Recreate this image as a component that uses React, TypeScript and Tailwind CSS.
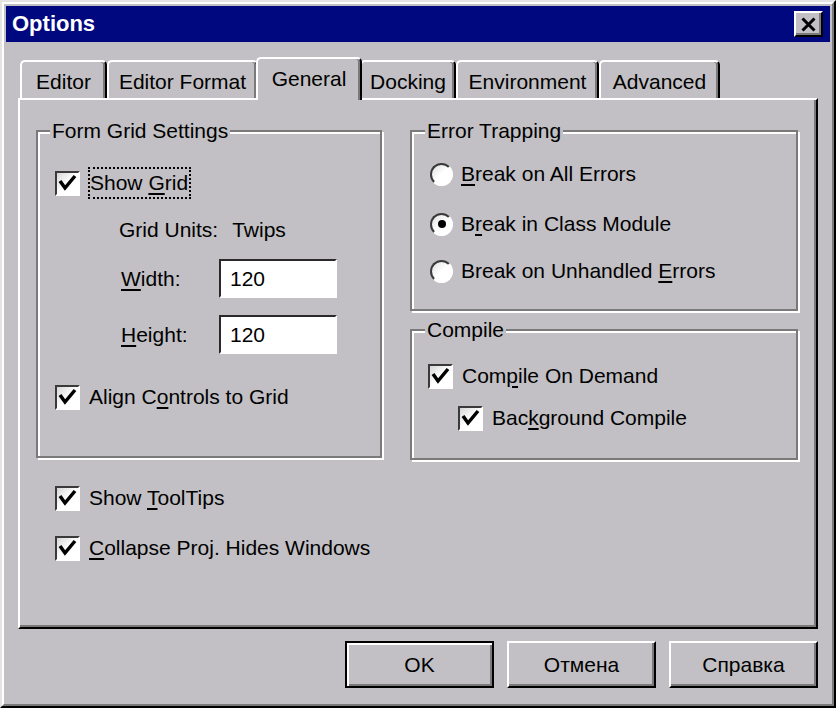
import type { ReactNode } from "react";

const tabs = [
  { label: "Editor", w: "w-[87px]" },
  { label: "Editor Format", w: "w-[151px]" },
  { label: "General", w: "w-[106px]", active: true },
  { label: "Docking", w: "w-[96px]" },
  { label: "Environment", w: "w-[143px]" },
  { label: "Advanced", w: "w-[121px]" },
];

function U({ children }: { children: ReactNode }) {
  return <span className="underline decoration-[2px] underline-offset-[3px]">{children}</span>;
}

function Check() {
  return (
    <span className="flex h-[25px] w-[25px] shrink-0 items-center justify-center border-2 border-t-[#3a3a3a] border-l-[#3a3a3a] border-r-white border-b-white bg-linear-to-br from-[#d6d6d6] via-white to-white">
      <svg viewBox="0 0 21 21" className="h-[21px] w-[21px]">
        <polyline points="3,8 8,15 18,3" fill="none" stroke="#000" strokeWidth="3.5" strokeLinejoin="miter" />
      </svg>
    </span>
  );
}

function Radio({ on = false }: { on?: boolean }) {
  return (
    <span className="flex h-[23px] w-[23px] shrink-0 items-center justify-center rounded-full border-2 border-t-[#3a3a3a] border-l-[#3a3a3a] border-r-white border-b-white bg-linear-to-br from-[#e0e0e0] via-white to-white">
      {on && <span className="h-[8px] w-[8px] rounded-full bg-black" />}
    </span>
  );
}

function CheckRow({ children, className = "" }: { children: ReactNode; className?: string }) {
  return (
    <div className={`flex h-[24px] items-center gap-[9px] ${className}`}>
      <Check />
      <span className="whitespace-nowrap">{children}</span>
    </div>
  );
}

function RadioRow({ children, on, className = "" }: { children: ReactNode; on?: boolean; className?: string }) {
  return (
    <div className={`flex h-[24px] items-center gap-[8px] ${className}`}>
      <Radio on={on} />
      <span className="whitespace-nowrap">{children}</span>
    </div>
  );
}

function Field({ value }: { value: string }) {
  return (
    <div className="h-[39px] w-[118px] border-2 border-t-[#2a2a2a] border-l-[#2a2a2a] border-r-white border-b-white bg-white pl-[9px] leading-[35px]">
      {value}
    </div>
  );
}

function Button({ children, main = false }: { children: ReactNode; main?: boolean }) {
  return (
    <div
      className={
        main
          ? "flex h-[47px] w-[149px] items-center justify-center border-2 border-black bg-[#c2c0c4] shadow-[inset_2px_2px_0_#fff,inset_-2px_-2px_0_#7a7a7a]"
          : "flex h-[47px] w-[149px] items-center justify-center border-2 border-t-white border-l-white border-r-black border-b-black bg-[#c2c0c4] shadow-[inset_-2px_-2px_0_#7a7a7a]"
      }
    >
      {children}
    </div>
  );
}

export default function App() {
  return (
    <div className="h-[708px] w-[836px] border-2 border-t-[#e4e4e4] border-l-[#e4e4e4] border-r-black border-b-black bg-[#c2c0c4] font-['Liberation_Sans',Arial,sans-serif] text-[21px] leading-[24px] text-black">
      <div className="flex h-full flex-col border-2 border-t-white border-l-white border-r-[#7a7a7a] border-b-[#7a7a7a] p-[2px]">
        {/* title bar */}
        <div className="flex h-[36px] shrink-0 items-center justify-between bg-[#00087f] pl-[6px] pr-[7px]">
          <span className="text-[22px] font-bold text-white">Options</span>
          <div className="flex h-[26px] w-[29px] items-center justify-center border-2 border-t-white border-l-white border-r-black border-b-black bg-[#c2c0c4] shadow-[inset_-2px_-2px_0_#7a7a7a]">
            <svg viewBox="0 0 15 15" className="h-[15px] w-[15px]">
              <path d="M1.5 1.5 L13.5 13.5 M13.5 1.5 L1.5 13.5" stroke="#000" strokeWidth="3" />
            </svg>
          </div>
        </div>

        <div className="px-[12px]">
          {/* tabs */}
          <div className="mt-[15px] flex h-[41px] items-end pl-[2px]">
            {tabs.map((t) =>
              t.active ? (
                <div
                  key={t.label}
                  className={`relative z-10 -mx-[2px] -mb-[2px] flex h-[43px] ${t.w} items-center justify-center rounded-t-[5px] border-t-2 border-l-2 border-r-2 border-t-white border-l-white border-r-black bg-[#c2c0c4] pb-[2px] shadow-[inset_-2px_0_0_#7a7a7a]`}
                >
                  {t.label}
                </div>
              ) : (
                <div
                  key={t.label}
                  className={`flex h-[38px] ${t.w} items-center justify-center rounded-t-[5px] border-t-2 border-l-2 border-r-2 border-t-white border-l-white border-r-black pt-[3px] shadow-[inset_-2px_0_0_#7a7a7a]`}
                >
                  {t.label}
                </div>
              ),
            )}
          </div>

          {/* panel */}
          <div className="h-[531px] border-2 border-t-white border-l-white border-r-black border-b-black pl-[16px] pr-[18px] pt-[19px] shadow-[inset_-2px_-2px_0_#7a7a7a]">
            <div className="flex gap-[28px]">
              <fieldset className="m-0 h-[339px] w-[346px] min-w-0 border-2 border-[#7a7a7a] p-0 shadow-[inset_2px_2px_0_#fff,2px_2px_0_#fff]">
                <legend className="ml-[12px] bg-[#c2c0c4] px-[2px] leading-[24px]">Form Grid Settings</legend>
                <div className="flex flex-col pl-[17px]">
                  <div className="mt-[24px] flex h-[32px] items-center gap-[8px]">
                    <Check />
                    <span className="h-[32px] border-2 border-dotted border-black pr-[1px] leading-[28px]">
                      Show <U>G</U>rid
                    </span>
                  </div>
                  <div className="ml-[64px] mt-[19px] flex h-[24px] items-center">
                    <span>Grid Units:</span>
                    <span className="ml-[14px]">Twips</span>
                  </div>
                  <div className="ml-[66px] mt-[17px] flex items-center">
                    <span className="w-[98px]">
                      <U>W</U>idth:
                    </span>
                    <Field value="120" />
                  </div>
                  <div className="ml-[66px] mt-[17px] flex items-center">
                    <span className="w-[98px]">
                      <U>H</U>eight:
                    </span>
                    <Field value="120" />
                  </div>
                  <CheckRow className="mt-[31px]">
                    Align C<U>o</U>ntrols to Grid
                  </CheckRow>
                </div>
              </fieldset>

              <div className="flex w-[388px] flex-col">
                <fieldset className="m-0 h-[192px] min-w-0 border-2 border-[#7a7a7a] p-0 shadow-[inset_2px_2px_0_#fff,2px_2px_0_#fff]">
                  <legend className="ml-[13px] bg-[#c2c0c4] px-[2px] leading-[24px]">Error Trapping</legend>
                  <div className="flex flex-col pl-[18px]">
                    <RadioRow className="mt-[19px]">
                      <U>B</U>reak on All Errors
                    </RadioRow>
                    <RadioRow on className="mt-[26px]">
                      B<U>r</U>eak in Class Module
                    </RadioRow>
                    <RadioRow className="mt-[23px]">
                      Break on Unhandled <U>E</U>rrors
                    </RadioRow>
                  </div>
                </fieldset>
                <fieldset className="m-0 mt-[7px] h-[142px] min-w-0 border-2 border-[#7a7a7a] p-0 shadow-[inset_2px_2px_0_#fff,2px_2px_0_#fff]">
                  <legend className="ml-[13px] bg-[#c2c0c4] px-[2px] leading-[24px]">Compile</legend>
                  <div className="flex flex-col pl-[16px]">
                    <CheckRow className="mt-[22px] gap-[8px]">
                      Com<U>p</U>ile On Demand
                    </CheckRow>
                    <CheckRow className="ml-[30px] mt-[18px] gap-[8px]">
                      Bac<U>k</U>ground Compile
                    </CheckRow>
                  </div>
                </fieldset>
              </div>
            </div>

            <div className="ml-[19px] flex flex-col">
              <CheckRow className="mt-[26px]">
                Show <U>T</U>oolTips
              </CheckRow>
              <CheckRow className="mt-[26px]">
                <U>C</U>ollapse Proj. Hides Windows
              </CheckRow>
            </div>
          </div>

          {/* buttons */}
          <div className="mt-[12px] flex justify-end gap-[13px]">
            <Button main>OK</Button>
            <Button>Отмена</Button>
            <Button>Справка</Button>
          </div>
        </div>
      </div>
    </div>
  );
}
